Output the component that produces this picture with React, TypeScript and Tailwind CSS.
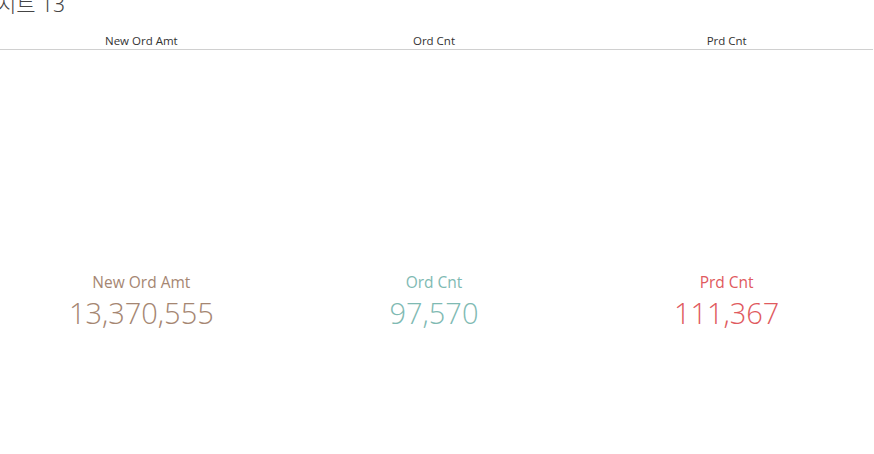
export default function App() {
  const cols = [
    { name: 'New Ord Amt', value: '13,370,555', color: 'text-[#a58672]' },
    { name: 'Ord Cnt', value: '97,570', color: 'text-[#7fbab3]' },
    { name: 'Prd Cnt', value: '111,367', color: 'text-[#e05a5e]' },
  ];

  return (
    <div className="w-[874px] h-[454px] overflow-hidden bg-white font-['Open_Sans','Noto_Sans_CJK_KR',sans-serif]">
      {/* Sheet title, clipped at the top edge like the original */}
      <div className="-mt-[6px] h-[38px] -ml-[3px] text-[21px] leading-[21px] text-[#444] font-light font-['Noto_Sans','Noto_Sans_CJK_KR',sans-serif]">
        시트 13
      </div>

      <div className="-ml-[5px] w-[878px]">
        <div className="grid grid-cols-3 h-[18px] border-b border-[#d0d0d0]">
          {cols.map((c) => (
            <div key={c.name} className="flex items-center justify-center text-[11.5px] font-medium text-[#333]">
              {c.name}
            </div>
          ))}
        </div>

        <div className="grid grid-cols-3 pt-[222px]">
          {cols.map((c) => (
            <div key={c.name} className={`flex flex-col items-center ${c.color}`}>
              <div className="text-[15.5px] leading-[20px]">{c.name}</div>
              <div className="text-[29px] leading-[42px] font-light">{c.value}</div>
            </div>
          ))}
        </div>
      </div>
    </div>
  );
}
